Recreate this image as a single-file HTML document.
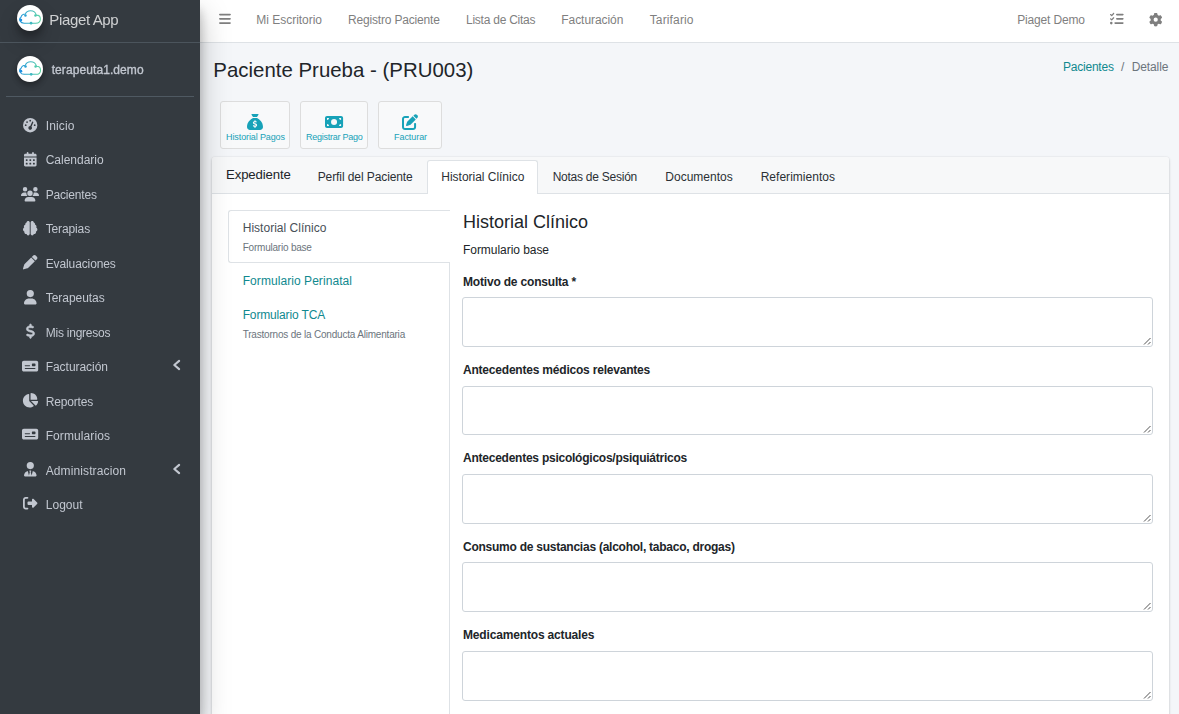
<!DOCTYPE html>
<html lang="es"><head><meta charset="utf-8"><title>Piaget App</title>
<style>
*{box-sizing:border-box}
html,body{margin:0;padding:0}
body{width:1179px;height:714px;overflow:hidden;position:relative;background:#f4f6f9;font-family:"Liberation Sans",sans-serif;font-size:12px;color:#212529}
.t{position:absolute;white-space:nowrap;line-height:20px;height:20px;margin:0;font-weight:400;display:block;text-decoration:none}
.ic{position:absolute;display:block;overflow:visible}
#sidebar{position:absolute;left:0;top:0;width:200px;height:714px;background:#343a40;box-shadow:0 14px 28px rgba(0,0,0,.25),0 10px 10px rgba(0,0,0,.22);z-index:10;will-change:transform}
#navbar{position:absolute;left:200px;top:0;width:979px;height:43px;background:#fff;border-bottom:1px solid #dee2e6;z-index:5}
.abs{position:absolute}
.logo{position:absolute;border-radius:50%;background:#fff;box-shadow:0 10px 20px rgba(0,0,0,.19),0 6px 6px rgba(0,0,0,.23);overflow:hidden}
.btn{position:absolute;background:#f8f9fa;border:1px solid #ddd;border-radius:3px}
.ta{position:absolute;background:#fff;border:1px solid #ced4da;border-radius:3px}
.ta svg{position:absolute;right:1px;bottom:1px}
</style></head><body>

<div id="content">
<h1 class="t h1" style="left:213.30px;top:59.80px;font-size:20.4px;color:#212529;letter-spacing:0.018px;">Paciente Prueba - (PRU003)</h1>
<span class="t bc1" style="left:1063.00px;top:56.70px;font-size:12px;color:#10898f;letter-spacing:-0.223px;">Pacientes</span>
<span class="t bc2" style="left:1121.00px;top:56.70px;font-size:12px;color:#6c757d;letter-spacing:0.366px;">/</span>
<span class="t bc3" style="left:1131.70px;top:56.70px;font-size:12px;color:#6c757d;letter-spacing:-0.107px;">Detalle</span>
<div class="btn" style="left:220px;top:101px;width:70px;height:48px"></div>
<div class="btn" style="left:300px;top:101px;width:68px;height:48px"></div>
<div class="btn" style="left:378px;top:101px;width:64px;height:48px"></div>
<svg class="ic" style="left:247.20px;top:113.95px" width="16.00" height="16.00" viewBox="0 0 512 512"><path fill="#17a2b8" d="M320 96H192L144.600 24.900C137.500 14.200 145.100 0 157.900 0H354.100c12.800 0 20.400 14.200 13.300 24.900L320 96zM192 128H320c3.800 2.500 8.100 5.300 13 8.400C389.700 172.700 512 250.900 512 416c0 53-43 96-96 96H96c-53 0-96-43-96-96C0 250.900 122.300 172.700 179 136.400l0 0 0 0c4.800-3.100 9.200-5.900 13-8.400zm84 88c0-11-9-20-20-20s-20 9-20 20v14c-7.600 1.700-15.200 4.400-22.200 8.500c-13.900 8.300-25.900 22.800-25.800 43.900c.1 20.300 12 33.100 24.700 40.700c11 6.600 24.700 10.800 35.600 14l1.700 .5c12.600 3.800 21.800 6.800 28 10.700c5.100 3.200 5.800 5.400 5.900 8.200c.1 5-1.800 8-5.900 10.500c-5 3.100-12.900 5-21.400 4.700c-11.100-.4-21.500-3.900-35.100-8.500c-2.300-.8-4.700-1.600-7.200-2.400c-10.500-3.500-21.800 2.200-25.300 12.600s2.200 21.800 12.600 25.300c1.900 .6 4 1.300 6.100 2.100l0 0 0 0c8.300 2.900 17.900 6.200 28.200 8.400V424c0 11 9 20 20 20s20-9 20-20V410.200c8-1.700 16-4.500 23.200-9c14.300-8.900 25.100-24.100 24.800-45c-.3-20.300-11.700-33.400-24.600-41.600c-11.500-7.200-25.900-11.600-37.100-15l0 0-.7-.2c-12.800-3.900-21.900-6.700-28.300-10.500c-5.200-3.100-5.300-4.900-5.300-6.700c0-3.700 1.400-6.500 6.200-9.300c5.400-3.200 13.600-5.100 21.500-5c9.600 .1 20.200 2.200 31.200 5.200c10.700 2.800 21.600-3.500 24.500-14.200s-3.500-21.600-14.200-24.500c-6.500-1.700-13.700-3.400-21.100-4.700V216z"/></svg>
<svg class="ic" style="left:324.90px;top:113.86px" width="18.10" height="16.09" viewBox="0 0 576 512"><path fill="#17a2b8" d="M64 64C28.700 64 0 92.700 0 128V384c0 35.300 28.700 64 64 64H512c35.300 0 64-28.700 64-64V128c0-35.300-28.700-64-64-64H64zm64 320H64V320c35.300 0 64 28.700 64 64zM64 192V128h64c0 35.300-28.700 64-64 64zM448 384c0-35.300 28.700-64 64-64v64H448zm64-192c-35.300 0-64-28.700-64-64h64v64zM288 160a96 96 0 1 1 0 192 96 96 0 1 1 0-192z"/></svg>
<svg class="ic" style="left:402.40px;top:113.80px" width="16.10" height="16.10" viewBox="0 0 512 512"><path fill="#17a2b8" d="M471.600 21.700c-21.900-21.900-57.300-21.900-79.200 0L362.300 51.700l97.900 97.900 30.100-30.100c21.900-21.900 21.900-57.300 0-79.200L471.600 21.700zm-299.200 220c-6.100 6.100-10.800 13.600-13.500 21.900l-29.600 88.800c-2.900 8.600-.6 18.100 5.800 24.600s15.900 8.700 24.600 5.800l88.800-29.600c8.200-2.700 15.700-7.400 21.900-13.500L437.700 172.300 339.700 74.300 172.400 241.700zM96 64C43 64 0 107 0 160V416c0 53 43 96 96 96H352c53 0 96-43 96-96V320c0-17.700-14.300-32-32-32s-32 14.300-32 32v96c0 17.700-14.300 32-32 32H96c-17.700 0-32-14.300-32-32V160c0-17.700 14.300-32 32-32h96c17.700 0 32-14.300 32-32s-14.300-32-32-32H96z"/></svg>
<span class="t b1" style="left:226.10px;top:127.20px;font-size:9px;color:#17a2b8;letter-spacing:-0.115px;">Historial Pagos</span>
<span class="t b2" style="left:305.90px;top:127.20px;font-size:9px;color:#17a2b8;letter-spacing:-0.238px;">Registrar Pago</span>
<span class="t b3" style="left:394.10px;top:127.20px;font-size:9px;color:#17a2b8;letter-spacing:-0.076px;">Facturar</span>
<div class="abs" style="left:212px;top:157px;width:957px;height:600px;background:#fff;border-radius:3px;box-shadow:0 0 1px rgba(0,0,0,.125),0 1px 3px rgba(0,0,0,.2)"></div>
<div class="abs" style="left:212px;top:157px;width:957px;height:37px;background:#f7f8f9;border-bottom:1px solid #dee2e6;border-radius:3px 3px 0 0"></div>
<div class="abs" style="left:427px;top:160px;width:111px;height:34px;background:#fff;border:1px solid #dee2e6;border-bottom:0;border-radius:3px 3px 0 0"></div>
<span class="t c0" style="left:226.00px;top:164.70px;font-size:13.2px;color:#212529;letter-spacing:-0.13px;">Expediente</span>
<span class="t c1" style="left:317.70px;top:166.70px;font-size:12px;color:#2b3035;letter-spacing:-0.09px;">Perfil del Paciente</span>
<span class="t c2" style="left:441.30px;top:166.70px;font-size:12px;color:#2b3035;letter-spacing:-0.021px;">Historial Clínico</span>
<span class="t c3" style="left:552.70px;top:166.70px;font-size:12px;color:#2b3035;letter-spacing:-0.25px;">Notas de Sesión</span>
<span class="t c4" style="left:665.30px;top:166.70px;font-size:12px;color:#2b3035;letter-spacing:0.003px;">Documentos</span>
<span class="t c5" style="left:760.70px;top:166.70px;font-size:12px;color:#2b3035;letter-spacing:0.021px;">Referimientos</span>
<div class="abs" style="left:449px;top:211px;width:1px;height:520px;background:#dee2e6"></div>
<div class="abs" style="left:228px;top:210px;width:222px;height:53px;background:#fff;border:1px solid #dee2e6;border-right:0;border-radius:3px 0 0 3px"></div>
<span class="t v1" style="left:242.70px;top:218.00px;font-size:12px;color:#495057;letter-spacing:0.026px;">Historial Clínico</span>
<span class="t v1s" style="left:242.70px;top:237.70px;font-size:10px;color:#6c757d;letter-spacing:-0.216px;">Formulario base</span>
<span class="t v2" style="left:242.70px;top:270.70px;font-size:12px;color:#10898f;letter-spacing:0.063px;">Formulario Perinatal</span>
<span class="t v3" style="left:242.70px;top:305.00px;font-size:12px;color:#10898f;letter-spacing:-0.154px;">Formulario TCA</span>
<span class="t v3s" style="left:242.70px;top:324.70px;font-size:10px;color:#6c757d;letter-spacing:-0.2px;">Trastornos de la Conducta Alimentaria</span>
<h4 class="t f0" style="left:463.00px;top:211.70px;font-size:18px;color:#212529;letter-spacing:-0.002px;">Historial Clínico</h4>
<span class="t f1" style="left:463.00px;top:240.00px;font-size:12px;color:#212529;letter-spacing:-0.047px;">Formulario base</span>
<label class="t l0" style="left:463.00px;top:271.70px;font-size:12px;color:#212529;font-weight:700;letter-spacing:-0.184px;">Motivo de consulta *</label>
<div class="ta" style="left:462px;top:297px;width:691px;height:50px"><svg width="8" height="8" viewBox="0 0 8 8"><path d="M7.5 1L1 7.5M7.5 5L5 7.5" stroke="#555" stroke-width="1" fill="none"/></svg></div>
<label class="t l1" style="left:463.00px;top:360.00px;font-size:12px;color:#212529;font-weight:700;letter-spacing:-0.207px;">Antecedentes médicos relevantes</label>
<div class="ta" style="left:462px;top:386px;width:691px;height:49px"><svg width="8" height="8" viewBox="0 0 8 8"><path d="M7.5 1L1 7.5M7.5 5L5 7.5" stroke="#555" stroke-width="1" fill="none"/></svg></div>
<label class="t l2" style="left:463.00px;top:448.00px;font-size:12px;color:#212529;font-weight:700;letter-spacing:-0.241px;">Antecedentes psicológicos/psiquiátricos</label>
<div class="ta" style="left:462px;top:474px;width:691px;height:50px"><svg width="8" height="8" viewBox="0 0 8 8"><path d="M7.5 1L1 7.5M7.5 5L5 7.5" stroke="#555" stroke-width="1" fill="none"/></svg></div>
<label class="t l3" style="left:463.00px;top:537.00px;font-size:12px;color:#212529;font-weight:700;letter-spacing:-0.249px;">Consumo de sustancias (alcohol, tabaco, drogas)</label>
<div class="ta" style="left:462px;top:562px;width:691px;height:50px"><svg width="8" height="8" viewBox="0 0 8 8"><path d="M7.5 1L1 7.5M7.5 5L5 7.5" stroke="#555" stroke-width="1" fill="none"/></svg></div>
<label class="t l4" style="left:463.00px;top:625.00px;font-size:12px;color:#212529;font-weight:700;letter-spacing:-0.163px;">Medicamentos actuales</label>
<div class="ta" style="left:462px;top:651px;width:691px;height:50px"><svg width="8" height="8" viewBox="0 0 8 8"><path d="M7.5 1L1 7.5M7.5 5L5 7.5" stroke="#555" stroke-width="1" fill="none"/></svg></div>
</div>
<nav id="navbar"><div class="abs" style="left:-200px;top:0">
<svg class="ic" style="left:219.06px;top:12.29px" width="11.91" height="13.61" viewBox="0 0 448 512"><path fill="#7f7f7f" d="M0 96C0 78.300 14.300 64 32 64H416c17.700 0 32 14.300 32 32s-14.300 32-32 32H32C14.300 128 0 113.700 0 96zM0 256c0-17.700 14.300-32 32-32H416c17.700 0 32 14.300 32 32s-14.300 32-32 32H32c-17.700 0-32-14.300-32-32zM448 416c0 17.700-14.300 32-32 32H32c-17.700 0-32-14.300-32-32s14.300-32 32-32H416c17.700 0 32 14.300 32 32z"/></svg>
<a class="t n1" style="left:256.30px;top:10.00px;font-size:12px;color:#7f7f7f;letter-spacing:-0.024px;">Mi Escritorio</a>
<a class="t n2" style="left:348.00px;top:10.00px;font-size:12px;color:#7f7f7f;letter-spacing:-0.178px;">Registro Paciente</a>
<a class="t n3" style="left:466.00px;top:10.00px;font-size:12px;color:#7f7f7f;letter-spacing:-0.244px;">Lista de Citas</a>
<a class="t n4" style="left:561.30px;top:10.00px;font-size:12px;color:#7f7f7f;letter-spacing:-0.064px;">Facturación</a>
<a class="t n5" style="left:649.70px;top:10.00px;font-size:12px;color:#7f7f7f;letter-spacing:0.147px;">Tarifario</a>
<a class="t n6" style="left:1017.30px;top:10.00px;font-size:12px;color:#7f7f7f;letter-spacing:-0.179px;">Piaget Demo</a>
<svg class="ic" style="left:1110.20px;top:12.41px" width="13.70" height="13.70" viewBox="0 0 512 512"><path fill="#7f7f7f" d="M152.100 38.200c9.900 8.900 10.700 24 1.800 33.900l-72 80c-4.400 4.900-10.600 7.800-17.200 7.900s-12.900-2.400-17.600-7L7 113C-2.300 103.600-2.300 88.400 7 79s24.600-9.400 33.900 0l22.100 22.100 55.100-61.200c8.900-9.900 24-10.700 33.900-1.800zm0 160c9.900 8.900 10.700 24 1.800 33.900l-72 80c-4.400 4.900-10.600 7.800-17.200 7.900s-12.900-2.400-17.600-7L7 273c-9.400-9.400-9.400-24.600 0-33.900s24.600-9.400 33.900 0l22.100 22.100 55.100-61.200c8.900-9.900 24-10.700 33.900-1.800zM224 96c0-17.700 14.300-32 32-32H480c17.700 0 32 14.300 32 32s-14.300 32-32 32H256c-17.700 0-32-14.300-32-32zm0 160c0-17.700 14.300-32 32-32H480c17.700 0 32 14.300 32 32s-14.300 32-32 32H256c-17.700 0-32-14.300-32-32zM160 416c0-17.700 14.300-32 32-32H480c17.700 0 32 14.300 32 32s-14.300 32-32 32H192c-17.700 0-32-14.300-32-32zM48 368a48 48 0 1 1 0 96 48 48 0 1 1 0-96z"/></svg>
<svg class="ic" style="left:1148.63px;top:13.03px" width="13.43" height="13.43" viewBox="0 0 512 512"><path fill="#7f7f7f" d="M495.900 166.600c3.200 8.700 .5 18.400-6.400 24.600l-43.300 39.400c1.100 8.300 1.700 16.800 1.700 25.400s-.6 17.100-1.700 25.400l43.300 39.400c6.900 6.200 9.600 15.900 6.400 24.600c-4.400 11.900-9.700 23.300-15.800 34.300l-4.700 8.100c-6.600 11-14 21.400-22.100 31.200c-5.900 7.200-15.700 9.600-24.500 6.800l-55.700-17.700c-13.400 10.300-28.200 18.900-44 25.400l-12.500 57.100c-2 9.100-9 16.300-18.200 17.800c-13.800 2.300-28 3.500-42.500 3.500s-28.700-1.200-42.500-3.500c-9.200-1.500-16.200-8.700-18.200-17.800l-12.500-57.100c-15.800-6.500-30.600-15.100-44-25.400L83.100 425.900c-8.800 2.800-18.600 .3-24.500-6.800c-8.100-9.800-15.500-20.200-22.100-31.200l-4.700-8.100c-6.100-11-11.400-22.400-15.800-34.300c-3.200-8.700-.5-18.400 6.400-24.600l43.300-39.400C64.600 273.100 64 264.600 64 256s.6-17.100 1.700-25.400L22.400 191.200c-6.900-6.200-9.600-15.900-6.400-24.600c4.400-11.900 9.700-23.300 15.800-34.300l4.700-8.100c6.600-11 14-21.400 22.100-31.200c5.900-7.200 15.700-9.600 24.500-6.800l55.700 17.700c13.400-10.300 28.200-18.900 44-25.400l12.500-57.100c2-9.100 9-16.300 18.200-17.800C227.300 1.200 241.500 0 256 0s28.700 1.200 42.500 3.500c9.200 1.500 16.200 8.700 18.200 17.800l12.500 57.100c15.800 6.500 30.600 15.100 44 25.400l55.700-17.700c8.800-2.800 18.600-.3 24.500 6.800c8.100 9.800 15.500 20.200 22.100 31.200l4.700 8.100c6.100 11 11.400 22.400 15.800 34.300zM256 336a80 80 0 1 0 0-160 80 80 0 1 0 0 160z"/></svg>
</div></nav>
<aside id="sidebar">
<div class="logo" style="left:17.2px;top:5px;width:26px;height:26px"><svg viewBox="0 0 100 100" width="100%" height="100%"><defs><linearGradient id="g1" x1="0" y1="0" x2="1" y2="0"><stop offset="0" stop-color="#2196dc"/><stop offset="1" stop-color="#5fd6a4"/></linearGradient></defs><g transform="translate(0,2)">
<path d="M27 68 H72 C84 68 90 60 90 52 C90 43 83 37 74 37 C72 27 63 20 52 20 C43 20 35 25 32 33 C24 33 17 38 15 46 C10 49 9 55 12 60 C15 65 20 68 27 68 Z" fill="none" stroke="url(#g1)" stroke-width="4" stroke-linejoin="round"/>
<circle cx="15" cy="56" r="5.2" fill="#1e90e0"/><circle cx="32.5" cy="38" r="4.8" fill="#2ba3d4"/><circle cx="71" cy="38" r="4.8" fill="#4fcab0"/><circle cx="54" cy="68" r="5.2" fill="#3fb9c0"/></g></svg></div>
<span class="t s0" style="left:49.30px;top:9.50px;font-size:15px;color:rgba(255,255,255,.76);letter-spacing:-0.357px;">Piaget App</span>
<div class="abs" style="left:0;top:42px;width:200px;height:1px;background:#4b545c"></div>
<div class="logo" style="left:17.2px;top:56px;width:26.2px;height:26.2px;box-shadow:0 3px 6px rgba(0,0,0,.16),0 3px 6px rgba(0,0,0,.23)"><svg viewBox="0 0 100 100" width="100%" height="100%"><defs><linearGradient id="g2" x1="0" y1="0" x2="1" y2="0"><stop offset="0" stop-color="#2196dc"/><stop offset="1" stop-color="#5fd6a4"/></linearGradient></defs><g transform="translate(0,2)">
<path d="M27 68 H72 C84 68 90 60 90 52 C90 43 83 37 74 37 C72 27 63 20 52 20 C43 20 35 25 32 33 C24 33 17 38 15 46 C10 49 9 55 12 60 C15 65 20 68 27 68 Z" fill="none" stroke="url(#g2)" stroke-width="4" stroke-linejoin="round"/>
<circle cx="15" cy="56" r="5.2" fill="#1e90e0"/><circle cx="32.5" cy="38" r="4.8" fill="#2ba3d4"/><circle cx="71" cy="38" r="4.8" fill="#4fcab0"/><circle cx="54" cy="68" r="5.2" fill="#3fb9c0"/></g></svg></div>
<span class="t s1" style="left:51.70px;top:60.00px;font-size:12px;color:#c2c7d0;letter-spacing:0.085px;-webkit-text-stroke:0.35px #c2c7d0;">terapeuta1.demo</span>
<div class="abs" style="left:6px;top:96px;width:188px;height:1px;background:#4f5962"></div>
<svg class="ic" style="left:22.80px;top:117.70px" width="14.40" height="14.40" viewBox="0 0 512 512"><path fill="#c2c7d0" d="M0 256a256 256 0 1 1 512 0A256 256 0 1 1 0 256zM288 96a32 32 0 1 0-64 0 32 32 0 1 0 64 0zM256 416c35.300 0 64-28.700 64-64c0-17.400-6.900-33.100-18.100-44.600L366 161.700c5.300-12.100-.2-26.300-12.300-31.600s-26.300 .2-31.600 12.300L257.900 288c-.6 0-1.300 0-1.900 0c-35.300 0-64 28.700-64 64s28.700 64 64 64zM176 144a32 32 0 1 0-64 0 32 32 0 1 0 64 0zM96 288a32 32 0 1 0 0-64 32 32 0 1 0 0 64zm352-32a32 32 0 1 0-64 0 32 32 0 1 0 64 0z"/></svg>
<a class="t m0" style="left:45.70px;top:116.00px;font-size:12px;color:#c2c7d0;letter-spacing:0.164px;">Inicio</a>
<svg class="ic" style="left:23.70px;top:152.10px" width="12.60" height="14.40" viewBox="0 0 448 512"><path fill="#c2c7d0" d="M128 0c17.700 0 32 14.300 32 32V64H288V32c0-17.700 14.300-32 32-32s32 14.300 32 32V64h48c26.500 0 48 21.500 48 48v48H0V112C0 85.500 21.500 64 48 64H96V32c0-17.700 14.300-32 32-32zM0 192H448V464c0 26.500-21.500 48-48 48H48c-26.500 0-48-21.500-48-48V192zm64 80v32c0 8.800 7.200 16 16 16h32c8.800 0 16-7.200 16-16V272c0-8.800-7.200-16-16-16H80c-8.800 0-16 7.200-16 16zm128 0v32c0 8.800 7.200 16 16 16h32c8.800 0 16-7.200 16-16V272c0-8.800-7.200-16-16-16H208c-8.800 0-16 7.200-16 16zm144-16c-8.800 0-16 7.200-16 16v32c0 8.800 7.200 16 16 16h32c8.800 0 16-7.200 16-16V272c0-8.800-7.200-16-16-16H336zM64 400v32c0 8.800 7.200 16 16 16h32c8.800 0 16-7.200 16-16V400c0-8.800-7.200-16-16-16H80c-8.800 0-16 7.200-16 16zm144-16c-8.800 0-16 7.200-16 16v32c0 8.800 7.200 16 16 16h32c8.800 0 16-7.200 16-16V400c0-8.800-7.200-16-16-16H208zm112 16v32c0 8.800 7.200 16 16 16h32c8.800 0 16-7.200 16-16V400c0-8.800-7.200-16-16-16H336c-8.800 0-16 7.200-16 16z"/></svg>
<a class="t m1" style="left:45.70px;top:150.00px;font-size:12px;color:#c2c7d0;letter-spacing:-0.003px;">Calendario</a>
<svg class="ic" style="left:21.00px;top:186.50px" width="18.00" height="14.40" viewBox="0 0 640 512"><path fill="#c2c7d0" d="M144 0a80 80 0 1 1 0 160A80 80 0 1 1 144 0zM512 0a80 80 0 1 1 0 160A80 80 0 1 1 512 0zM0 298.700C0 239.800 47.800 192 106.700 192h42.700c15.900 0 31 3.500 44.600 9.700c-1.300 7.200-1.900 14.700-1.900 22.300c0 38.200 16.800 72.500 43.300 96c-.2 0-.4 0-.7 0H21.300C9.600 320 0 310.400 0 298.700zM405.300 320c-.2 0-.4 0-.7 0c26.600-23.500 43.300-57.800 43.300-96c0-7.600-.7-15-1.900-22.300c13.600-6.300 28.700-9.700 44.600-9.700h42.700C592.200 192 640 239.800 640 298.700c0 11.800-9.600 21.300-21.300 21.300H405.300zM224 224a96 96 0 1 1 192 0 96 96 0 1 1 -192 0zM128 485.300C128 411.700 187.700 352 261.300 352H378.700C452.300 352 512 411.700 512 485.300c0 14.700-11.900 26.700-26.700 26.700H154.700c-14.700 0-26.700-11.900-26.700-26.700z"/></svg>
<a class="t m2" style="left:45.70px;top:185.00px;font-size:12px;color:#c2c7d0;letter-spacing:-0.188px;">Pacientes</a>
<svg class="ic" style="left:22.80px;top:220.90px" width="14.40" height="14.40" viewBox="0 0 512 512"><path fill="#c2c7d0" d="M184 0c30.900 0 56 25.100 56 56V456c0 30.900-25.100 56-56 56c-28.900 0-52.700-21.900-55.700-50.100c-5.200 1.400-10.700 2.100-16.300 2.100c-35.300 0-64-28.700-64-64c0-7.400 1.300-14.600 3.600-21.200C21.400 367.400 0 338.200 0 304c0-31.900 18.700-59.500 45.800-72.300C37.100 220.800 32 207 32 192c0-30.700 21.600-56.300 50.400-62.600C80.800 123.900 80 118 80 112c0-29.900 20.600-55.100 48.300-62.100C131.300 21.900 155.100 0 184 0zM328 0c28.900 0 52.600 21.900 55.700 49.900c27.800 7 48.300 32.100 48.300 62.100c0 6-.8 11.900-2.400 17.400c28.800 6.200 50.400 31.900 50.400 62.600c0 15-5.100 28.800-13.800 39.700C493.300 244.500 512 272.100 512 304c0 34.200-21.400 63.400-51.600 74.800c2.300 6.600 3.600 13.800 3.600 21.200c0 35.300-28.700 64-64 64c-5.600 0-11.100-.7-16.300-2.100c-3 28.200-26.800 50.100-55.700 50.100c-30.900 0-56-25.100-56-56V56c0-30.900 25.100-56 56-56z"/></svg>
<a class="t m3" style="left:45.70px;top:219.00px;font-size:12px;color:#c2c7d0;letter-spacing:-0.131px;">Terapias</a>
<svg class="ic" style="left:22.80px;top:255.30px" width="14.40" height="14.40" viewBox="0 0 512 512"><path fill="#c2c7d0" d="M362.700 19.300L314.300 67.700 444.300 197.700l48.400-48.400c25-25 25-65.500 0-90.500L453.300 19.300c-25-25-65.500-25-90.500 0zm-71 71L58.600 323.500c-10.400 10.400-18 23.300-22.200 37.400L1 481.200C-1.500 489.700 .8 498.800 7 505s15.300 8.500 23.700 6.100l120.300-35.400c14.100-4.200 27-11.800 37.400-22.200L421.700 220.300 291.700 90.300z"/></svg>
<a class="t m4" style="left:45.70px;top:254.00px;font-size:12px;color:#c2c7d0;letter-spacing:-0.114px;">Evaluaciones</a>
<svg class="ic" style="left:23.70px;top:289.70px" width="12.60" height="14.40" viewBox="0 0 448 512"><path fill="#c2c7d0" d="M224 256A128 128 0 1 0 224 0a128 128 0 1 0 0 256zm-45.700 48C79.800 304 0 383.800 0 482.300C0 498.700 13.300 512 29.700 512H418.300c16.400 0 29.700-13.300 29.700-29.700C448 383.800 368.200 304 269.700 304H178.300z"/></svg>
<a class="t m5" style="left:45.70px;top:288.00px;font-size:12px;color:#c2c7d0;letter-spacing:-0.036px;">Terapeutas</a>
<svg class="ic" style="left:25.50px;top:324.10px" width="9.00" height="14.40" viewBox="0 0 320 512"><path fill="#c2c7d0" stroke="#c2c7d0" stroke-width="22" d="M160 0c17.700 0 32 14.300 32 32V67.700c1.600 .2 3.100 .4 4.700 .7c.4 .1 .7 .1 1.100 .2l48 8.800c17.400 3.200 28.900 19.900 25.700 37.200s-19.900 28.900-37.200 25.700l-47.500-8.700c-31.300-4.600-58.900-1.500-78.300 6.200s-27.200 18.300-29 28.100c-2 10.700-.5 16.700 1.200 20.400c1.800 3.900 5.500 8.300 12.800 13.200c16.300 10.700 41.300 17.700 73.700 26.300l2.900 .8c28.600 7.600 63.600 16.800 89.600 33.800c14.200 9.300 27.600 21.900 35.900 39.500c8.500 17.900 10.300 37.900 6.400 59.200c-6.900 38-33.100 63.400-65.600 76.700c-13.700 5.600-28.600 9.200-44.400 11V480c0 17.700-14.300 32-32 32s-32-14.300-32-32V445.100c-.4-.1-.9-.1-1.300-.2l-.2 0 0 0c-24.400-3.800-64.500-14.300-91.500-26.300c-16.100-7.200-23.400-26.100-16.200-42.200s26.100-23.400 42.200-16.200c20.900 9.300 55.300 18.500 75.200 21.600c31.900 4.700 58.200 2 76-5.300c16.900-6.900 24.600-16.900 26.800-28.900c1.900-10.600 .4-16.700-1.300-20.400c-1.900-4-5.600-8.400-13-13.300c-16.400-10.700-41.500-17.700-74-26.300l-2.800-.7 0 0C119.400 279.300 84.400 270 58.400 253c-14.200-9.300-27.500-22-35.800-39.600c-8.400-17.900-10.100-37.900-6.100-59.200C23.700 116 52.300 91.200 84.800 78.300c13.300-5.300 27.900-8.900 43.200-11V32c0-17.700 14.300-32 32-32z"/></svg>
<a class="t m6" style="left:45.70px;top:323.00px;font-size:12px;color:#c2c7d0;letter-spacing:-0.229px;">Mis ingresos</a>
<svg class="ic" style="left:21.90px;top:358.50px" width="16.20" height="14.40" viewBox="0 0 576 512"><path fill="#c2c7d0" d="M64 64C28.700 64 0 92.700 0 128V384c0 35.300 28.700 64 64 64H512c35.300 0 64-28.700 64-64V128c0-35.300-28.700-64-64-64H64zm48 160H272c8.800 0 16 7.200 16 16s-7.200 16-16 16H112c-8.800 0-16-7.200-16-16s7.200-16 16-16zM96 336c0-8.800 7.200-16 16-16H464c8.800 0 16 7.200 16 16s-7.200 16-16 16H112c-8.800 0-16-7.200-16-16zM376 160h80c13.300 0 24 10.700 24 24v48c0 13.300-10.700 24-24 24H376c-13.300 0-24-10.700-24-24V184c0-13.300 10.700-24 24-24z"/></svg>
<a class="t m7" style="left:45.70px;top:357.00px;font-size:12px;color:#c2c7d0;letter-spacing:-0.036px;">Facturación</a>
<svg class="ic" style="left:170px;top:357.35px" width="14" height="16" viewBox="0 0 14 16"><path d="M9.15 3.9L4.3 8L9.15 12.1" fill="none" stroke="#c2c7d0" stroke-width="2.1" stroke-linecap="round" stroke-linejoin="round"/></svg>
<svg class="ic" style="left:21.90px;top:392.90px" width="16.20" height="14.40" viewBox="0 0 576 512"><path fill="#c2c7d0" d="M304 240V16.600c0-9 7-16.600 16-16.600C443.700 0 544 100.300 544 224c0 9-7.600 16-16.600 16H304zM32 272C32 150.700 122.100 50.300 239 34.300c9.200-1.300 17 6.100 17 15.400V288L412.500 444.500c6.700 6.700 6.200 17.700-1.500 23.100C371.800 495.600 323.800 512 272 512C139.500 512 32 404.600 32 272zm526.400 16c9.300 0 16.600 7.800 15.400 17c-7.700 55.900-34.600 105.600-73.900 142.300c-6 5.600-15.400 5.200-21.200-.7L320 288H558.400z"/></svg>
<a class="t m8" style="left:45.70px;top:392.00px;font-size:12px;color:#c2c7d0;letter-spacing:-0.174px;">Reportes</a>
<svg class="ic" style="left:21.90px;top:427.30px" width="16.20" height="14.40" viewBox="0 0 576 512"><path fill="#c2c7d0" d="M64 64C28.700 64 0 92.700 0 128V384c0 35.300 28.700 64 64 64H512c35.300 0 64-28.700 64-64V128c0-35.300-28.700-64-64-64H64zm48 160H272c8.800 0 16 7.200 16 16s-7.200 16-16 16H112c-8.800 0-16-7.200-16-16s7.200-16 16-16zM96 336c0-8.800 7.200-16 16-16H464c8.800 0 16 7.200 16 16s-7.200 16-16 16H112c-8.800 0-16-7.200-16-16zM376 160h80c13.300 0 24 10.700 24 24v48c0 13.300-10.700 24-24 24H376c-13.300 0-24-10.700-24-24V184c0-13.300 10.700-24 24-24z"/></svg>
<a class="t m9" style="left:45.70px;top:426.00px;font-size:12px;color:#c2c7d0;letter-spacing:0.087px;">Formularios</a>
<svg class="ic" style="left:23.70px;top:461.70px" width="12.60" height="14.40" viewBox="0 0 448 512"><path fill="#c2c7d0" d="M96 128a128 128 0 1 0 256 0A128 128 0 1 0 96 128zm94.500 200.200l18.600 31L175.800 483.100l-36-146.900c-2-8.100-9.800-13.400-17.900-11.300C51.900 342.400 0 405.800 0 481.300c0 17 13.800 30.700 30.700 30.700H162.500c0 0 0 0 .1 0H168 280h5.500c0 0 0 0 .1 0H417.300c17 0 30.700-13.800 30.700-30.700c0-75.500-51.900-138.900-121.900-156.400c-8.100-2-15.900 3.300-17.900 11.300l-36 146.900L238.900 359.200l18.600-31c6.400-10.700-1.300-24.200-13.700-24.200H224 204.300c-12.400 0-20.100 13.600-13.700 24.200z"/></svg>
<a class="t m10" style="left:45.70px;top:461.00px;font-size:12px;color:#c2c7d0;letter-spacing:0.115px;">Administracion</a>
<svg class="ic" style="left:170px;top:460.70px" width="14" height="16" viewBox="0 0 14 16"><path d="M9.15 3.9L4.3 8L9.15 12.1" fill="none" stroke="#c2c7d0" stroke-width="2.1" stroke-linecap="round" stroke-linejoin="round"/></svg>
<svg class="ic" style="left:22.80px;top:496.10px" width="14.40" height="14.40" viewBox="0 0 512 512"><path fill="#c2c7d0" d="M377.900 105.900L500.700 228.700c7.200 7.200 11.300 17.100 11.300 27.300s-4.100 20.100-11.300 27.300L377.900 406.100c-6.400 6.400-15 9.900-24 9.900c-18.700 0-33.900-15.200-33.900-33.900l0-62.100-128 0c-17.700 0-32-14.300-32-32l0-64c0-17.700 14.300-32 32-32l128 0 0-62.100c0-18.700 15.200-33.900 33.900-33.900c9 0 17.600 3.600 24 9.900zM160 96L96 96c-17.700 0-32 14.300-32 32l0 256c0 17.700 14.300 32 32 32l64 0c17.700 0 32 14.300 32 32s-14.300 32-32 32l-64 0c-53 0-96-43-96-96L0 128C0 75 43 32 96 32l64 0c17.700 0 32 14.300 32 32s-14.300 32-32 32z"/></svg>
<a class="t m11" style="left:45.70px;top:495.00px;font-size:12px;color:#c2c7d0;letter-spacing:0.05px;">Logout</a>
</aside>
</body></html>
